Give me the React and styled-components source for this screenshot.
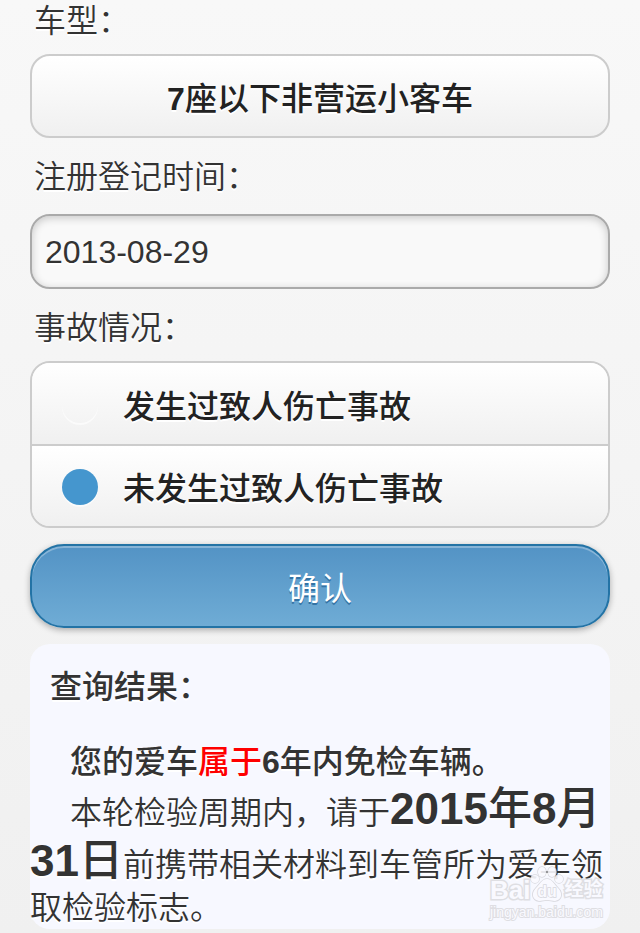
import { useState } from "react";
import styled, { createGlobalStyle, css } from "styled-components";

const GlobalStyle = createGlobalStyle`
  * {
    box-sizing: border-box;
  }

  body {
    margin: 0;
    color: #333;
    background: #f1f1f1;
    font-family: "Liberation Sans", "Noto Sans CJK SC", sans-serif;
    font-size: 32px;
    line-height: 42px;
    text-shadow: 0 2px 0 #fff;
  }

  input,
  select,
  button {
    margin: 0;
    font: inherit;
    text-shadow: inherit;
  }
`;

const Page = styled.main`
  min-height: 100vh;
  padding: 0 30px 4px;
  background: linear-gradient(#f8f8f8, #f0f0f0);
`;

const labelText = css`
  display: block;
  margin-bottom: 12px;
  padding: 0 4px;
  font-weight: 350;
`;

const Field = styled.div`
  padding-bottom: 18px;
`;

const FieldLabel = styled.label`
  ${labelText}
`;

const RadioField = styled.fieldset`
  min-width: 0;
  margin: 0;
  padding: 0 0 16px;
  border: 0;
`;

const Legend = styled.legend`
  ${labelText}
`;

const raised = css`
  color: #222;
  background: linear-gradient(#fff, #f0f0f0);
  font-weight: 500;
`;

const CarSelect = styled.select`
  ${raised}
  display: block;
  width: 100%;
  height: 84px;
  padding: 6px 0 0;
  border: 2px solid #ccc;
  border-radius: 20px;
  appearance: none;
  font-family: "Liberation Sans", "Noto Sans CJK SC Medium", "Noto Sans CJK SC", sans-serif;
  font-weight: 600;
  text-align: center;
  text-align-last: center;
`;

const DateInput = styled.input`
  display: block;
  width: 100%;
  height: 75px;
  margin-top: 16px;
  padding: 2px 13px 0;
  border: 2px solid #aaa;
  border-radius: 20px;
  color: #333;
  background: #f9f9f9;
  box-shadow: inset 0 2px 8px rgba(0, 0, 0, 0.2);
`;

const RadioGroup = styled.div`
  overflow: hidden;
  border: 2px solid #ccc;
  border-radius: 20px;
`;

const RadioRow = styled.label`
  ${raised}
  display: flex;
  align-items: center;
  gap: 25px;
  height: 81px;
  padding: 0 30px;

  & + & {
    height: 82px;
    border-top: 2px solid #ccc;
  }
`;

const RadioText = styled.span`
  padding-top: 6px;
`;

const Radio = styled.input`
  flex: none;
  width: 36px;
  height: 36px;
  margin-top: 2px;
  border-radius: 50%;
  appearance: none;
  box-shadow: 0 2px 0 rgba(255, 255, 255, 0.6);

  &:checked {
    background: #4596ce;
  }
`;

const SubmitButton = styled.button`
  display: block;
  width: 100%;
  height: 84px;
  padding: 6px 0 0;
  border: 2px solid #2373a5;
  border-radius: 34px;
  color: #fff;
  background: linear-gradient(#5393c5, #6facd5);
  box-shadow: inset 0 2px 0 rgba(255, 255, 255, 0.3), 0 2px 6px rgba(0, 0, 0, 0.3);
  font-weight: 400;
  text-shadow: 0 2px 0 #3373a5;
`;

const Result = styled.section`
  position: relative;
  margin-top: 16px;
  padding-top: 22px;
  border-radius: 20px;
  background: #f7f8ff;
`;

const ResultTitle = styled.h2`
  margin: 0 0 33px;
  padding: 0 20px;
  font-size: inherit;
  font-weight: 500;
`;

const ResultLine = styled.p`
  margin: 0;
  text-indent: 40px;
  font-weight: ${(props) => (props.$medium ? 500 : 350)};
`;

const Belong = styled.strong`
  color: #f00;
  font-weight: 500;
`;

const DueDate = styled.strong`
  font-size: 44px;
  line-height: 52px;
  font-weight: 500;
`;

const Watermark = styled.div`
  position: absolute;
  right: 4px;
  bottom: 9px;
  width: 116px;
  color: #fafaff;
  opacity: 0.9;
  font-weight: 700;
  text-shadow: none;
  text-indent: 0;
  paint-order: stroke;
  -webkit-text-stroke: 3px #dcdce0;
`;

const WatermarkLogo = styled.div`
  display: flex;
  align-items: flex-end;
  font-size: 26px;
  line-height: 28px;

  svg {
    flex: none;
    width: 34px;
    height: 38px;
  }
`;

const WatermarkName = styled.span`
  font-size: 19px;
`;

const WatermarkUrl = styled.div`
  font-size: 14px;
  line-height: 16px;
  font-weight: 400;
  -webkit-text-stroke: 2px #dcdce0;
`;

function BaiduMark() {
  return (
    <Watermark>
      <WatermarkLogo>
        Bai
        <svg viewBox="0 0 34 38" fill="#fafaff" stroke="#d4d4da" strokeWidth="1.5">
          <ellipse cx="5" cy="13" rx="4" ry="4" />
          <ellipse cx="12" cy="6" rx="4" ry="5" />
          <ellipse cx="22" cy="6" rx="4" ry="5" />
          <ellipse cx="29" cy="13" rx="4" ry="4" />
          <path d="M17 13c-5 0-7 5-11 9-5 5-4 12 3 13 3 0 5-1 8-1s5 1 8 1c7-1 8-8 3-13-4-4-6-9-11-9z" />
          <text x="17" y="31" fontSize="16" textAnchor="middle">du</text>
        </svg>
        <WatermarkName>经验</WatermarkName>
      </WatermarkLogo>
      <WatermarkUrl>jingyan.baidu.com</WatermarkUrl>
    </Watermark>
  );
}

export default function App() {
  const [date, setDate] = useState("2013-08-29");
  const [accident, setAccident] = useState("no");

  return (
    <>
      <GlobalStyle />
      <Page>
        <Field>
          <FieldLabel htmlFor="car-type">车型：</FieldLabel>
          <CarSelect id="car-type">
            <option>7座以下非营运小客车</option>
          </CarSelect>
        </Field>

        <Field>
          <FieldLabel htmlFor="reg-date">注册登记时间：</FieldLabel>
          <DateInput id="reg-date" type="text" value={date} onChange={(e) => setDate(e.target.value)} />
        </Field>

        <RadioField>
          <Legend>事故情况：</Legend>
          <RadioGroup>
            <RadioRow>
              <Radio type="radio" name="accident" checked={accident === "yes"} onChange={() => setAccident("yes")} />
              <RadioText>发生过致人伤亡事故</RadioText>
            </RadioRow>
            <RadioRow>
              <Radio type="radio" name="accident" checked={accident === "no"} onChange={() => setAccident("no")} />
              <RadioText>未发生过致人伤亡事故</RadioText>
            </RadioRow>
          </RadioGroup>
        </RadioField>

        <SubmitButton type="button">确认</SubmitButton>

        <Result>
          <ResultTitle>查询结果：</ResultTitle>
          <ResultLine $medium>
            您的爱车<Belong>属于</Belong><b>6</b>年内免检车辆。
          </ResultLine>
          <ResultLine>
            本轮检验周期内，请于
            <DueDate><b>2015</b>年<b>8</b>月<b>31</b>日</DueDate>
            前携带相关材料到车管所为爱车领取检验标志。
          </ResultLine>
          <BaiduMark />
        </Result>
      </Page>
    </>
  );
}
